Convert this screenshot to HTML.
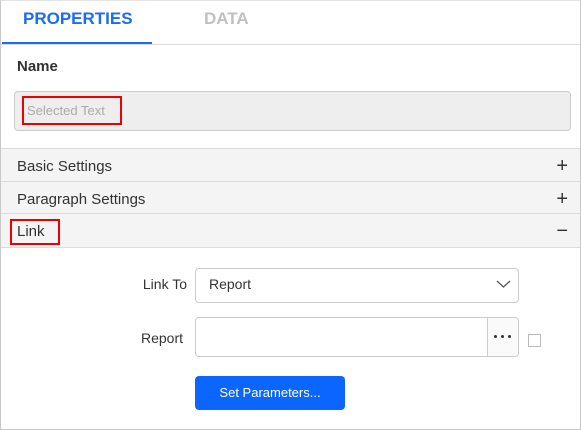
<!DOCTYPE html><html><head><style>
body{margin:0;width:581px;height:430px;overflow:hidden;background:#fff;font-family:"Liberation Sans",sans-serif;}
.a{position:absolute}
.frame{left:0;top:0;width:579px;height:428px;border:1px solid #c8c8c8;border-top-color:#e4e4e4}
.hdr{left:1px;width:579px;height:32px;background:#f4f4f4;border-top:1px solid #dcdcdc;font-size:15px;color:#333;line-height:32px}
.hdr span{position:absolute;left:16px;top:2px}
.hdr i{position:absolute;right:12px;top:1px;font-style:normal;font-size:20px;color:#333}
</style></head><body>
<div class="a frame"></div>
<div class="a" style="left:23px;top:9px;font-size:17px;font-weight:bold;color:#1a6cf0">PROPERTIES</div>
<div class="a" style="left:204px;top:9px;font-size:17px;font-weight:bold;color:#c0c0c0">DATA</div>
<div class="a" style="left:1px;top:44px;width:579px;height:1px;background:#ddd"></div>
<div class="a" style="left:2px;top:42px;width:150px;height:2px;background:#1a6cf0"></div>
<div class="a" style="left:17px;top:58px;font-size:15px;font-weight:bold;color:#333">Name</div>
<div class="a" style="left:14px;top:91px;width:555px;height:38px;background:#eee;border:1px solid #ccc;border-radius:4px"></div>
<div class="a" style="left:22px;top:96px;width:96px;height:25px;border:2px solid #e00"></div>
<div class="a" style="left:27px;top:103px;font-size:13px;color:#aaa">Selected Text</div>
<div class="a hdr" style="top:148px"><span>Basic Settings</span><i>+</i></div>
<div class="a hdr" style="top:181px"><span>Paragraph Settings</span><i>+</i></div>
<div class="a hdr" style="top:213px;height:33px;border-bottom:1px solid #dcdcdc"><span>Link</span><i>−</i></div>
<div class="a" style="left:10px;top:219px;width:46px;height:22px;border:2px solid #e00"></div>
<div class="a" style="left:120px;top:276px;width:67px;text-align:right;font-size:14px;color:#333">Link To</div>
<div class="a" style="left:195px;top:268px;width:322px;height:33px;border:1px solid #ccc;border-radius:4px"></div>
<div class="a" style="left:209px;top:276px;font-size:14px;color:#333">Report</div>
<svg class="a" style="left:496px;top:279px" width="15" height="10"><path d="M1 2 L7.5 8 L14 2" fill="none" stroke="#555" stroke-width="1.3"/></svg>
<div class="a" style="left:120px;top:330px;width:63px;text-align:right;font-size:14px;color:#333">Report</div>
<div class="a" style="left:195px;top:317px;width:322px;height:38px;border:1px solid #ccc;border-radius:4px;overflow:hidden"><div style="position:absolute;left:291px;top:0;width:31px;height:38px;background:#fafafa;border-left:1px solid #ccc"></div></div>
<div class="a" style="left:494px;top:335px;width:17px;height:4px;display:flex;justify-content:space-between"><b style="width:3px;height:3px;border-radius:50%;background:#333"></b><b style="width:3px;height:3px;border-radius:50%;background:#333"></b><b style="width:3px;height:3px;border-radius:50%;background:#333"></b></div>
<div class="a" style="left:528px;top:334px;width:11px;height:11px;border:1px solid #bbb"></div>
<div class="a" style="left:195px;top:376px;width:150px;height:34px;background:#0a66ff;border-radius:4px;color:#fff;font-size:13px;text-align:center;line-height:34px">Set Parameters...</div>
</body></html>
